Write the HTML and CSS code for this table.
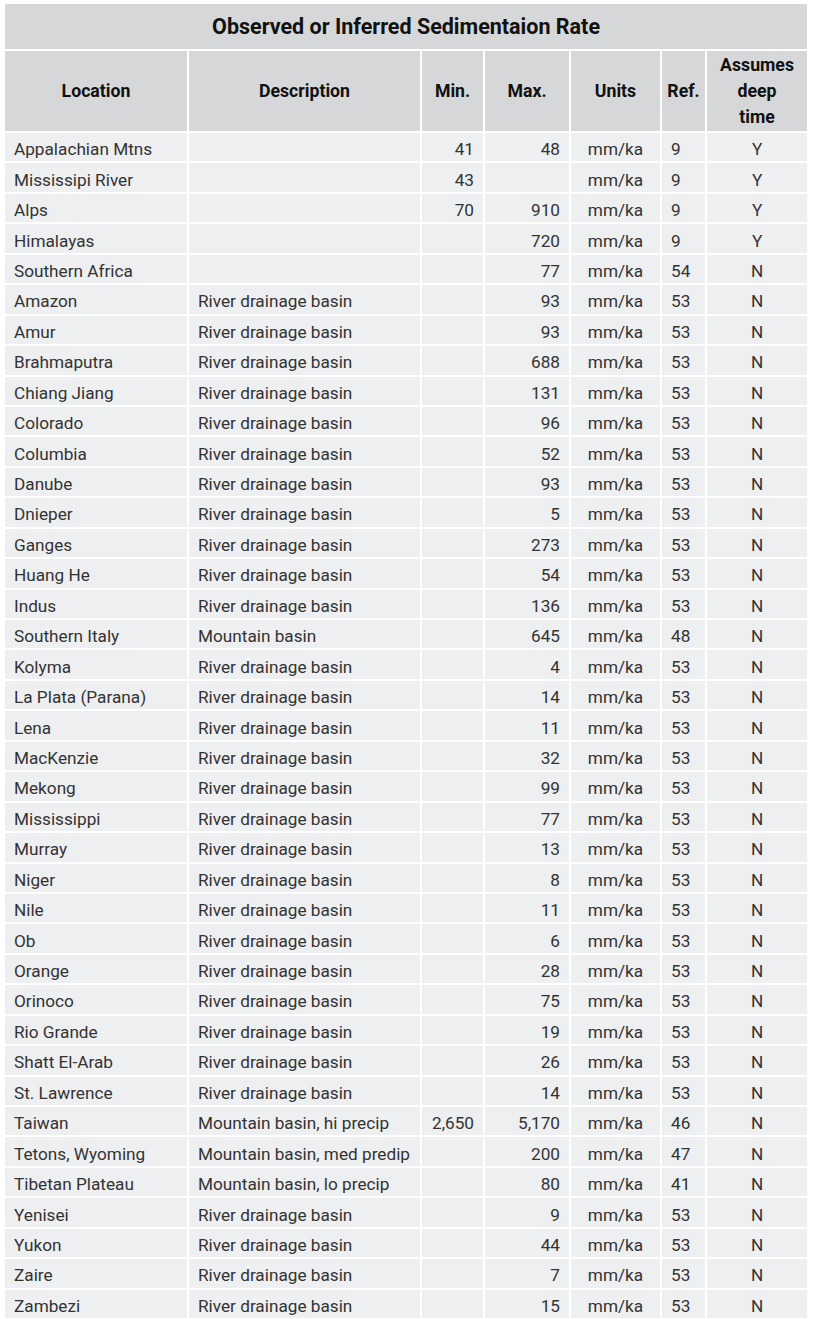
FILE: index.html
```html
<!DOCTYPE html>
<html>
<head>
<meta charset="utf-8">
<link rel="stylesheet" href="styles.css">
</head>
<body>
<table class="sed">
<colgroup>
<col class="c-loc"><col class="c-desc"><col class="c-min"><col class="c-max"><col class="c-units"><col class="c-ref"><col class="c-deep">
</colgroup>
<thead>
<tr class="title"><th colspan="7">Observed or Inferred Sedimentaion Rate</th></tr>
<tr class="head">
<th>Location</th><th>Description</th><th>Min.</th><th>Max.</th><th>Units</th><th>Ref.</th><th class="deep">Assumes deep time</th>
</tr>
</thead>
<tbody>
<tr><td>Appalachian Mtns</td><td></td><td class="num">41</td><td class="num">48</td><td class="ctr">mm/ka</td><td>9</td><td class="ctr">Y</td></tr>
<tr><td>Mississipi River</td><td></td><td class="num">43</td><td class="num"></td><td class="ctr">mm/ka</td><td>9</td><td class="ctr">Y</td></tr>
<tr><td>Alps</td><td></td><td class="num">70</td><td class="num">910</td><td class="ctr">mm/ka</td><td>9</td><td class="ctr">Y</td></tr>
<tr><td>Himalayas</td><td></td><td class="num"></td><td class="num">720</td><td class="ctr">mm/ka</td><td>9</td><td class="ctr">Y</td></tr>
<tr><td>Southern Africa</td><td></td><td class="num"></td><td class="num">77</td><td class="ctr">mm/ka</td><td>54</td><td class="ctr">N</td></tr>
<tr><td>Amazon</td><td>River drainage basin</td><td class="num"></td><td class="num">93</td><td class="ctr">mm/ka</td><td>53</td><td class="ctr">N</td></tr>
<tr><td>Amur</td><td>River drainage basin</td><td class="num"></td><td class="num">93</td><td class="ctr">mm/ka</td><td>53</td><td class="ctr">N</td></tr>
<tr><td>Brahmaputra</td><td>River drainage basin</td><td class="num"></td><td class="num">688</td><td class="ctr">mm/ka</td><td>53</td><td class="ctr">N</td></tr>
<tr><td>Chiang Jiang</td><td>River drainage basin</td><td class="num"></td><td class="num">131</td><td class="ctr">mm/ka</td><td>53</td><td class="ctr">N</td></tr>
<tr><td>Colorado</td><td>River drainage basin</td><td class="num"></td><td class="num">96</td><td class="ctr">mm/ka</td><td>53</td><td class="ctr">N</td></tr>
<tr><td>Columbia</td><td>River drainage basin</td><td class="num"></td><td class="num">52</td><td class="ctr">mm/ka</td><td>53</td><td class="ctr">N</td></tr>
<tr><td>Danube</td><td>River drainage basin</td><td class="num"></td><td class="num">93</td><td class="ctr">mm/ka</td><td>53</td><td class="ctr">N</td></tr>
<tr><td>Dnieper</td><td>River drainage basin</td><td class="num"></td><td class="num">5</td><td class="ctr">mm/ka</td><td>53</td><td class="ctr">N</td></tr>
<tr><td>Ganges</td><td>River drainage basin</td><td class="num"></td><td class="num">273</td><td class="ctr">mm/ka</td><td>53</td><td class="ctr">N</td></tr>
<tr><td>Huang He</td><td>River drainage basin</td><td class="num"></td><td class="num">54</td><td class="ctr">mm/ka</td><td>53</td><td class="ctr">N</td></tr>
<tr><td>Indus</td><td>River drainage basin</td><td class="num"></td><td class="num">136</td><td class="ctr">mm/ka</td><td>53</td><td class="ctr">N</td></tr>
<tr><td>Southern Italy</td><td>Mountain basin</td><td class="num"></td><td class="num">645</td><td class="ctr">mm/ka</td><td>48</td><td class="ctr">N</td></tr>
<tr><td>Kolyma</td><td>River drainage basin</td><td class="num"></td><td class="num">4</td><td class="ctr">mm/ka</td><td>53</td><td class="ctr">N</td></tr>
<tr><td>La Plata (Parana)</td><td>River drainage basin</td><td class="num"></td><td class="num">14</td><td class="ctr">mm/ka</td><td>53</td><td class="ctr">N</td></tr>
<tr><td>Lena</td><td>River drainage basin</td><td class="num"></td><td class="num">11</td><td class="ctr">mm/ka</td><td>53</td><td class="ctr">N</td></tr>
<tr><td>MacKenzie</td><td>River drainage basin</td><td class="num"></td><td class="num">32</td><td class="ctr">mm/ka</td><td>53</td><td class="ctr">N</td></tr>
<tr><td>Mekong</td><td>River drainage basin</td><td class="num"></td><td class="num">99</td><td class="ctr">mm/ka</td><td>53</td><td class="ctr">N</td></tr>
<tr><td>Mississippi</td><td>River drainage basin</td><td class="num"></td><td class="num">77</td><td class="ctr">mm/ka</td><td>53</td><td class="ctr">N</td></tr>
<tr><td>Murray</td><td>River drainage basin</td><td class="num"></td><td class="num">13</td><td class="ctr">mm/ka</td><td>53</td><td class="ctr">N</td></tr>
<tr><td>Niger</td><td>River drainage basin</td><td class="num"></td><td class="num">8</td><td class="ctr">mm/ka</td><td>53</td><td class="ctr">N</td></tr>
<tr><td>Nile</td><td>River drainage basin</td><td class="num"></td><td class="num">11</td><td class="ctr">mm/ka</td><td>53</td><td class="ctr">N</td></tr>
<tr><td>Ob</td><td>River drainage basin</td><td class="num"></td><td class="num">6</td><td class="ctr">mm/ka</td><td>53</td><td class="ctr">N</td></tr>
<tr><td>Orange</td><td>River drainage basin</td><td class="num"></td><td class="num">28</td><td class="ctr">mm/ka</td><td>53</td><td class="ctr">N</td></tr>
<tr><td>Orinoco</td><td>River drainage basin</td><td class="num"></td><td class="num">75</td><td class="ctr">mm/ka</td><td>53</td><td class="ctr">N</td></tr>
<tr><td>Rio Grande</td><td>River drainage basin</td><td class="num"></td><td class="num">19</td><td class="ctr">mm/ka</td><td>53</td><td class="ctr">N</td></tr>
<tr><td>Shatt El-Arab</td><td>River drainage basin</td><td class="num"></td><td class="num">26</td><td class="ctr">mm/ka</td><td>53</td><td class="ctr">N</td></tr>
<tr><td>St. Lawrence</td><td>River drainage basin</td><td class="num"></td><td class="num">14</td><td class="ctr">mm/ka</td><td>53</td><td class="ctr">N</td></tr>
<tr><td>Taiwan</td><td>Mountain basin, hi precip</td><td class="num">2,650</td><td class="num">5,170</td><td class="ctr">mm/ka</td><td>46</td><td class="ctr">N</td></tr>
<tr><td>Tetons, Wyoming</td><td>Mountain basin, med predip</td><td class="num"></td><td class="num">200</td><td class="ctr">mm/ka</td><td>47</td><td class="ctr">N</td></tr>
<tr><td>Tibetan Plateau</td><td>Mountain basin, lo precip</td><td class="num"></td><td class="num">80</td><td class="ctr">mm/ka</td><td>41</td><td class="ctr">N</td></tr>
<tr><td>Yenisei</td><td>River drainage basin</td><td class="num"></td><td class="num">9</td><td class="ctr">mm/ka</td><td>53</td><td class="ctr">N</td></tr>
<tr><td>Yukon</td><td>River drainage basin</td><td class="num"></td><td class="num">44</td><td class="ctr">mm/ka</td><td>53</td><td class="ctr">N</td></tr>
<tr><td>Zaire</td><td>River drainage basin</td><td class="num"></td><td class="num">7</td><td class="ctr">mm/ka</td><td>53</td><td class="ctr">N</td></tr>
<tr><td>Zambezi</td><td>River drainage basin</td><td class="num"></td><td class="num">15</td><td class="ctr">mm/ka</td><td>53</td><td class="ctr">N</td></tr>
</tbody>
</table>
</body>
</html>
```
FILE: styles.css
```css
html, body {
  margin: 0;
  padding: 0;
  background: #ffffff;
}

.sed {
  margin: 2px 0 0 3px;
  border-collapse: separate;
  border-spacing: 2px;
  table-layout: fixed;
  width: 806px;
  font-family: Roboto, "Liberation Sans", sans-serif;
  color: #333333;
}

.c-loc { width: 182px; }
.c-desc { width: 231px; }
.c-min { width: 61px; }
.c-max { width: 84px; }
.c-units { width: 89px; }
.c-ref { width: 43px; }
.c-deep { width: 100px; }

.sed th,
.sed td {
  padding: 0;
  box-sizing: border-box;
}

.title th {
  height: 44.5px;
  background: #d6d7d8;
  font-size: 21.5px;
  font-weight: 700;
  color: #111;
  text-align: center;
  vertical-align: middle;
}

.head th {
  height: 80.5px;
  background: #d6d7d8;
  font-size: 17.7px;
  font-weight: 700;
  line-height: 26px;
  color: #111;
  text-align: center;
  vertical-align: middle;
  padding: 1px 4px 0;
}

.head th.deep {
  padding: 1px 12px 0;
}

.sed td {
  height: 28.45px;
  background: #eeeff0;
  font-size: 17.2px;
  line-height: 20px;
  padding: 4px 9px 0;
  vertical-align: middle;
  white-space: nowrap;
}

.sed td.num { text-align: right; }
.sed td.ctr { text-align: center; padding: 4px 0 0; }
```
